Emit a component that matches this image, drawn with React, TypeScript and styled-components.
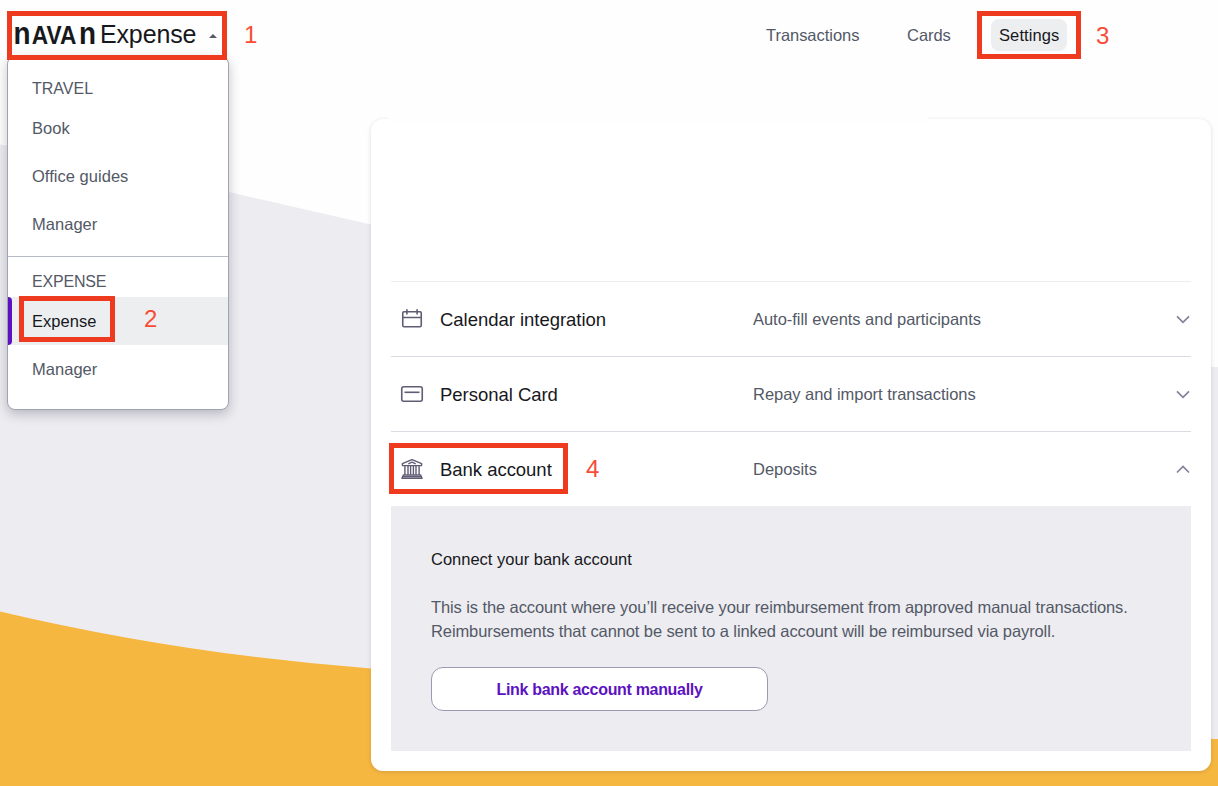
import React from "react";
import styled, { createGlobalStyle } from "styled-components";

const GlobalStyle = createGlobalStyle`
  *, *::before, *::after { box-sizing: border-box; }
  body {
    margin: 0;
    background: #fefefe;
    font-family: "Liberation Sans", Arial, sans-serif;
    font-size: 16.5px;
    letter-spacing: -0.04px;
    color: #535966;
  }
`;

const Page = styled.div`
  position: relative;
  width: 1218px;
  height: 786px;
  overflow: hidden;
  background: #fefefe;
`;

const Backdrop = styled.svg`
  position: absolute;
  inset: 0;
`;

const Header = styled.header`
  position: relative;
  z-index: 2;
  display: flex;
  align-items: center;
  justify-content: space-between;
  height: 70px;
  padding: 0 151px 0 15px;
`;

const Brand = styled.div`
  position: relative;
  display: flex;
  align-items: center;
  height: 70px;
`;

const Wordmark = styled.svg`
  display: block;
  overflow: visible;
  fill: #17181c;
  font-weight: 700;
  letter-spacing: 0;
`;

const Product = styled.span`
  margin: -2px 0 0 4px;
  font-size: 25px;
  line-height: 32px;
  letter-spacing: -0.15px;
  color: #17181c;
`;

const Caret = styled.span`
  margin: 2px 0 0 13px;
  border: 4px solid transparent;
  border-top: 0;
  border-bottom: 4px solid #535966;
`;

const Nav = styled.nav`
  display: flex;
  gap: 32px;
`;

const NavItem = styled.a<{ $active?: boolean; $width: number }>`
  position: relative;
  display: flex;
  align-items: center;
  width: ${(p) => p.$width}px;
  height: 32px;
  padding: 1px 0 0 8px;
  border-radius: 8px;
  white-space: nowrap;
  letter-spacing: ${(p) => (p.$active ? "0.1px" : "-0.04px")};
  color: ${(p) => (p.$active ? "#17181c" : "#535966")};
  background: ${(p) => (p.$active ? "#edeef0" : "transparent")};
`;

const Frame = styled.span<{ $x: number; $y: number; $w: number; $h: number }>`
  position: absolute;
  z-index: 4;
  left: ${(p) => p.$x}px;
  top: ${(p) => p.$y}px;
  width: ${(p) => p.$w}px;
  height: ${(p) => p.$h}px;
  border: 5px solid #ee3a1f;
  pointer-events: none;
`;

const Step = styled.span<{ $x: number; $y: number }>`
  position: absolute;
  z-index: 4;
  left: ${(p) => p.$x}px;
  top: ${(p) => p.$y}px;
  font-size: 24px;
  line-height: 28px;
  letter-spacing: 0;
  color: #f84c36;
`;

const Menu = styled.div`
  position: absolute;
  z-index: 1;
  left: 7px;
  top: 56px;
  width: 222px;
  padding: 15px 0 16px;
  background: #fff;
  border: 1px solid #9fa4b2;
  border-radius: 8px;
  box-shadow: 0 4px 12px rgba(30, 30, 50, 0.26);
`;

const MenuGroup = styled.div`
  & + & {
    margin-top: 8px;
    padding-top: 8px;
    border-top: 1px solid #b6bac6;
  }
`;

const MenuTitle = styled.div<{ $tracking: number }>`
  height: 32px;
  padding-left: 24px;
  font-size: 16px;
  line-height: 34px;
  letter-spacing: ${(p) => p.$tracking}px;
`;

const MenuItem = styled.div<{ $active?: boolean }>`
  position: relative;
  height: 48px;
  padding-left: 24px;
  line-height: 49px;
  letter-spacing: 0.03px;
  color: ${(p) => (p.$active ? "#17181c" : "#535966")};
  background: ${(p) => (p.$active ? "#edeef0" : "transparent")};
`;

const ActiveMark = styled.span`
  position: absolute;
  left: 0;
  top: 0;
  width: 4px;
  height: 48px;
  border-radius: 0 4px 4px 0;
  background: #5d12c1;
`;

const Card = styled.main`
  position: relative;
  width: 840px;
  height: 652px;
  margin: 49px 0 0 371px;
  padding: 162px 20px 20px;
  background: #fff;
  border-radius: 12px;
  box-shadow: 0 1px 4px rgba(20, 20, 40, 0.15);

  &::before {
    content: "";
    position: absolute;
    left: 17px;
    top: -5px;
    width: 540px;
    height: 8px;
    background: #fefefe;
  }
`;

const Row = styled.div<{ $first?: boolean }>`
  position: relative;
  display: flex;
  align-items: center;
  height: 75px;
  padding: 0 0 0 9px;
  border-top: 1px solid ${(p) => (p.$first ? "#ededf0" : "#dcdbe3")};
`;

const RowTitle = styled.h2`
  width: 313px;
  margin: 0 0 0 16px;
  padding-top: 2px;
  font-size: 18.5px;
  font-weight: 400;
  letter-spacing: -0.03px;
  color: #17181c;
`;

const RowNote = styled.span`
  flex: 1;
  padding-top: 1px;
`;

const Icon = styled.svg<{ $weight?: number }>`
  display: block;
  width: 24px;
  height: 24px;
  fill: none;
  stroke: #5f5c74;
  stroke-width: ${(p) => p.$weight ?? 1.6};
  stroke-linejoin: round;
`;

const Chevron = styled.svg`
  display: block;
  fill: none;
  stroke: #85819c;
  stroke-width: 1.7;
`;

const Panel = styled.section`
  height: 245px;
  padding: 41px 40px 40px;
  background: #edecf1;
`;

const PanelTitle = styled.h3`
  margin: 0 0 24px;
  font-size: 16.5px;
  font-weight: 400;
  line-height: 24px;
  letter-spacing: 0;
  color: #17181c;
`;

const Line = styled.div`
  line-height: 24px;
  white-space: nowrap;
  letter-spacing: -0.1px;
`;

const LinkButton = styled.button`
  display: block;
  width: 337px;
  height: 44px;
  margin-top: 24px;
  padding: 2px 0 0;
  border: 1px solid #9d99b0;
  border-radius: 12px;
  background: #fff;
  font: 700 16px "Liberation Sans", Arial, sans-serif;
  letter-spacing: -0.32px;
  color: #5d12c1;
`;

const CalendarIcon = () => (
  <Icon viewBox="0 0 24 24">
    <rect x="2.75" y="4.75" width="18.5" height="15" rx="1.2" />
    <path d="M2.75 10.5h18.5M6.9 2.2v5.3M17.1 2.2v5.3" />
  </Icon>
);

const CardIcon = () => (
  <Icon viewBox="0 0 24 24">
    <rect x="1.75" y="4.75" width="20.5" height="14.5" rx="2" />
    <path d="M4.5 10.3h15" />
  </Icon>
);

const BankIcon = () => (
  <Icon viewBox="0 0 24 24" $weight={1.4}>
    <path d="M2.4 6.7 12 2.7l9.6 4v1.9H2.4z" />
    <path d="M8.3 6.8 12 5.2l3.7 1.6" />
    <path d="M4.9 8.6v9.2M8 8.6v9.2M10.6 8.6v9.2M13.4 8.6v9.2M16 8.6v9.2M19.1 8.6v9.2" />
    <path d="M3.4 18h17.2l1.5 3.3H1.9z" />
    <path d="M2.6 19.7h18.8" />
  </Icon>
);

const Arrow = ({ up }: { up?: boolean }) => (
  <Chevron width="16" height="16" viewBox="0 0 16 16">
    <path d={up ? "M2 11.5l6-6 6 6" : "M2 5.3l6 6 6-6"} />
  </Chevron>
);

export default function App() {
  return (
    <Page>
      <GlobalStyle />
      <Backdrop width="1218" height="786" viewBox="0 0 1218 786">
        <path
          d="M0 144.5Q115 165 229 192L371 224.5C640 289 900 367 1218 367V786H0z"
          fill="#edecf1"
        />
        <path
          d="M0 611.5Q180 654 371 668.5C650 690 940 739 1218 739V786H0z"
          fill="#f6b741"
        />
      </Backdrop>

      <Header>
        <Brand>
          <Wordmark width="81" height="20" viewBox="0 0 81 20">
            <text x="-1.5" y="19" fontSize="32" textLength="17" lengthAdjust="spacingAndGlyphs">n</text>
            <text x="16.8" y="19" fontSize="26" textLength="44.5" lengthAdjust="spacingAndGlyphs">AVA</text>
            <text x="64" y="19" fontSize="32" textLength="17" lengthAdjust="spacingAndGlyphs">n</text>
          </Wordmark>
          <Product>Expense</Product>
          <Caret />
          <Frame $x={-8} $y={11} $w={220} $h={49} />
          <Step $x={229} $y={21}>1</Step>
        </Brand>
        <Nav>
          <NavItem $width={109}>Transactions</NavItem>
          <NavItem $width={60}>Cards</NavItem>
          <NavItem $width={76} $active>
            Settings
            <Frame $x={-14} $y={-8} $w={104} $h={48} />
            <Step $x={105} $y={3}>3</Step>
          </NavItem>
        </Nav>
      </Header>

      <Menu>
        <MenuGroup>
          <MenuTitle $tracking={0}>TRAVEL</MenuTitle>
          <MenuItem>Book</MenuItem>
          <MenuItem>Office guides</MenuItem>
          <MenuItem>Manager</MenuItem>
        </MenuGroup>
        <MenuGroup>
          <MenuTitle $tracking={-0.2}>EXPENSE</MenuTitle>
          <MenuItem $active>
            <ActiveMark />
            Expense
            <Frame $x={11} $y={-1} $w={96} $h={46} />
            <Step $x={136} $y={8}>2</Step>
          </MenuItem>
          <MenuItem>Manager</MenuItem>
        </MenuGroup>
      </Menu>

      <Card>
        <Row $first>
          <CalendarIcon />
          <RowTitle>Calendar integration</RowTitle>
          <RowNote>Auto-fill events and participants</RowNote>
          <Arrow />
        </Row>
        <Row>
          <CardIcon />
          <RowTitle>Personal Card</RowTitle>
          <RowNote>Repay and import transactions</RowNote>
          <Arrow />
        </Row>
        <Row>
          <BankIcon />
          <RowTitle>Bank account</RowTitle>
          <RowNote>Deposits</RowNote>
          <Arrow up />
          <Frame $x={-2} $y={11} $w={179} $h={51} />
          <Step $x={195} $y={23}>4</Step>
        </Row>
        <Panel>
          <PanelTitle>Connect your bank account</PanelTitle>
          <Line>
            This is the account where you’ll receive your reimbursement from approved manual transactions.
          </Line>
          <Line>
            Reimbursements that cannot be sent to a linked account will be reimbursed via payroll.
          </Line>
          <LinkButton>Link bank account manually</LinkButton>
        </Panel>
      </Card>
    </Page>
  );
}
